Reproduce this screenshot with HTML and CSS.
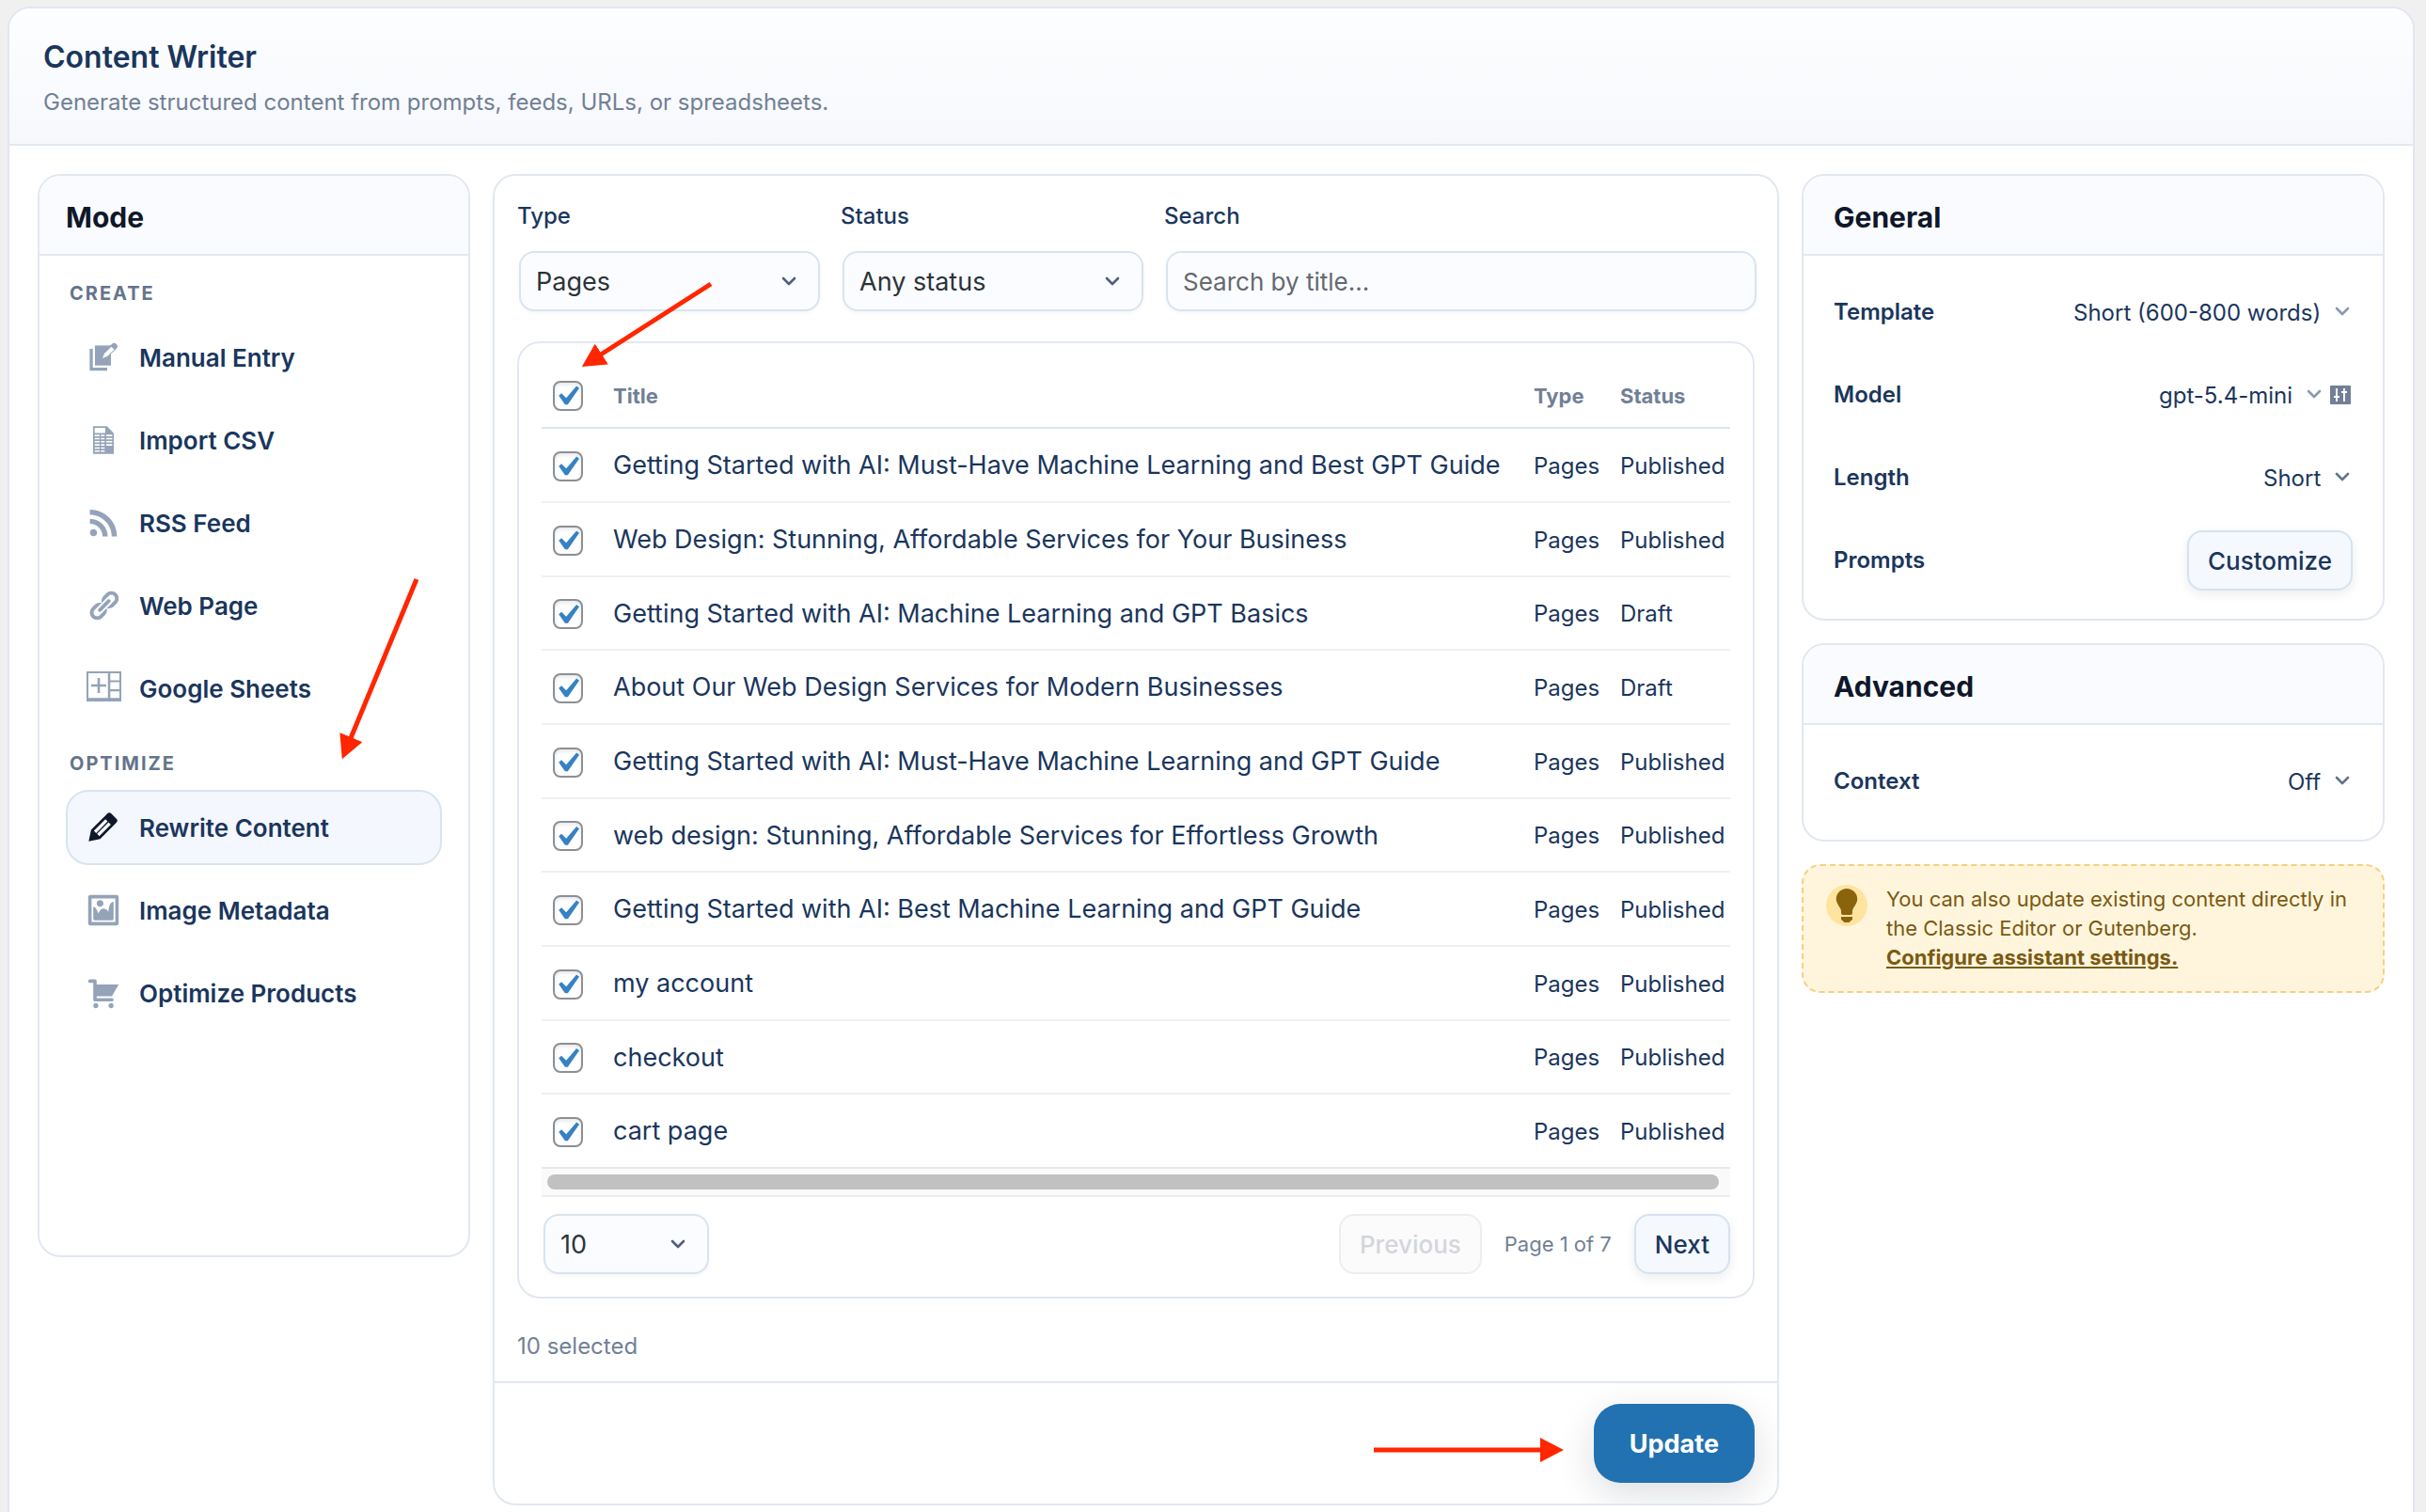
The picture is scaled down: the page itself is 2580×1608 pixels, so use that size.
FILE: index.html
```html
<!DOCTYPE html>
<html lang="en">
<head>
    <meta charset="UTF-8">
    <meta name="viewport" content="width=device-width, initial-scale=1.0">
    <title>Content Writer</title>
    <link rel="stylesheet" href="styles.css">
</head>
<body>
    <!-- shared chevron -->
    <svg width="0" height="0" class="sprite">
        <symbol id="chevron" viewBox="0 0 16 10">
            <path d="M2 2l6 6 6-6" fill="none" stroke="currentColor" stroke-width="2.6" stroke-linecap="round" stroke-linejoin="round"/>
        </symbol>
    </svg>

    <div class="shell">
        <header class="shell-header">
            <h1>Content Writer</h1>
            <p>Generate structured content from prompts, feeds, URLs, or spreadsheets.</p>
        </header>

        <div class="layout">
            <!-- Mode sidebar -->
            <aside class="card mode">
                <h2 class="card-title">Mode</h2>
                <nav class="mode-nav">
                    <h3>Create</h3>
                    <button type="button" class="mode-item">
                        <svg viewBox="0 0 36 36"><path d="M3.4 9h3.3v20H22v3.3H3.4z"/><path d="M9 5.4h17v21.3H9z"/><path d="M24 11.500l5.300-5" stroke="currentColor" stroke-width="7" stroke-linecap="round"/><path d="M17 19l2-5 7.500-7.200 3 3-7.500 7.200z" fill="#fff"/></svg>
                        Manual Entry
                    </button>
                    <button type="button" class="mode-item">
                        <svg viewBox="0 0 36 36"><path d="M7 3.3h14.7L29 10.7v22H7z"/><path fill="#fff" d="M8.7 5h11.2v5.6H8.7zM8.7 12.3H14V14H8.7zM15.3 12.3h4V14h-4zM21 12.3h6.4V14H21zM8.7 15.7H14v1.6H8.7zM15.3 15.7h4v1.6h-4zM21 15.7h6.4v1.6H21zM8.7 19H14v1.6H8.7zM15.3 19h4v1.6h-4zM21 19h6.4v1.6H21zM8.7 22.3H14v1.6H8.7zM15.3 22.3h4v1.6h-4zM21 22.3h6.4v1.6H21zM8.7 25.7H14v1.6H8.7zM15.3 25.7h4v1.6h-4zM8.7 29H14v1.6H8.7zM15.3 29h4v1.6h-4z"/></svg>
                        Import CSV
                    </button>
                    <button type="button" class="mode-item">
                        <svg viewBox="0 0 20 20"><path d="M14.92 18H18C18 9.32 10.82 2.25 2 2.25v3.02c7.12 0 12.92 5.71 12.92 12.73zm-5.44 0h3.08C12.56 12.27 7.82 7.6 2 7.6v3.02c2 0 3.87.77 5.29 2.16C8.7 14.17 9.48 16.03 9.48 18zm-5.35-.02c1.17 0 2.13-.93 2.13-2.09 0-1.15-.96-2.09-2.13-2.09-1.18 0-2.13.94-2.13 2.09 0 1.16.95 2.09 2.13 2.09z"/></svg>
                        RSS Feed
                    </button>
                    <button type="button" class="mode-item">
                        <svg viewBox="0 0 20 20"><path d="M17.74 2.76c1.68 1.69 1.68 4.41 0 6.1l-1.53 1.52c-1.12 1.12-2.7 1.47-4.14 1.09l2.62-2.61.76-.77.76-.76c.84-.84.84-2.2 0-3.04-.84-.85-2.2-.85-3.04 0l-.77.76-3.38 3.38c-.37-1.44-.02-3.02 1.1-4.14l1.52-1.53c1.69-1.68 4.42-1.68 6.1 0zM8.59 13.43l5.34-5.34c.42-.42.42-1.1 0-1.52-.44-.43-1.13-.39-1.53 0l-5.33 5.34c-.42.42-.42 1.1 0 1.52.44.43 1.13.39 1.52 0zm-.76 2.29l4.14-4.15c.38 1.44.03 3.02-1.09 4.14l-1.52 1.53c-1.69 1.68-4.41 1.68-6.1 0-1.68-1.68-1.68-4.42 0-6.1l1.53-1.52c1.12-1.12 2.7-1.47 4.14-1.1l-4.14 4.15c-.85.84-.85 2.2 0 3.05.84.84 2.2.84 3.04 0z"/></svg>
                        Web Page
                    </button>
                    <button type="button" class="mode-item">
                        <svg viewBox="0 0 36 36"><path fill-rule="evenodd" d="M0 0h37v32H0zM2 2v26.300h20.800V2zM25.300 2v7.400H35V2zM25.300 11.600v7.400H35v-7.400zM25.300 21.200v7.100H35v-7.100z"/><path d="M11.700 7h2.600v6.700h6.700v2.600h-6.700V23h-2.600v-6.700H5v-2.600h6.700z"/></svg>
                        Google Sheets
                    </button>

                    <h3>Optimize</h3>
                    <button type="button" class="mode-item active">
                        <svg viewBox="2 2 16.4 16.4"><path d="M13.89 3.39l2.71 2.72c.46.46.42 1.24.03 1.64l-8.01 8.02-5.56 1.16 1.16-5.58s7.6-7.63 7.99-8.03c.39-.39 1.22-.39 1.68.07zm-2.73 2.79l-5.59 5.61 1.11 1.11 5.54-5.65zm-2.97 8.23l5.58-5.6-1.07-1.08-5.59 5.6z"/></svg>
                        Rewrite Content
                    </button>
                    <button type="button" class="mode-item">
                        <svg viewBox="0 0 20 20"><path d="M2.25 1h15.5c.69 0 1.25.56 1.25 1.25v15.5c0 .69-.56 1.25-1.25 1.25H2.25C1.56 19 1 18.44 1 17.75V2.25C1 1.56 1.56 1 2.25 1zM17 17V3H3v14h14zM10 6c0-1.1-.9-2-2-2s-2 .9-2 2 .9 2 2 2 2-.9 2-2zm3 5s0-6 3-6v10c0 .55-.45 1-1 1H5c-.55 0-1-.45-1-1V8c2 0 3 4 3 4s1-3 3-3 3 2 3 2z"/></svg>
                        Image Metadata
                    </button>
                    <button type="button" class="mode-item">
                        <svg viewBox="0 0 20 20"><path d="M6 13h9c.55 0 1 .45 1 1s-.45 1-1 1H5c-.55 0-1-.45-1-1V4H2c-.55 0-1-.45-1-1s.45-1 1-1h3c.55 0 1 .45 1 1v2h13l-4 7H6v1zm-.5 3c.83 0 1.5.67 1.5 1.5S6.33 19 5.5 19 4 18.33 4 17.5 4.67 16 5.5 16zm9 0c.83 0 1.5.67 1.5 1.5s-.67 1.5-1.5 1.5-1.5-.67-1.5-1.5.67-1.5 1.5-1.5z"/></svg>
                        Optimize Products
                    </button>
                </nav>
            </aside>

            <!-- Content picker -->
            <main class="card picker">
                <div class="picker-body">
                    <div class="filters">
                        <div class="field">
                            <label for="filter-type">Type</label>
                            <div class="select-box">
                                <select id="filter-type"><option>Pages</option></select>
                                <svg><use href="#chevron"/></svg>
                            </div>
                        </div>
                        <div class="field">
                            <label for="filter-status">Status</label>
                            <div class="select-box">
                                <select id="filter-status"><option>Any status</option></select>
                                <svg><use href="#chevron"/></svg>
                            </div>
                        </div>
                        <div class="field">
                            <label for="filter-search">Search</label>
                            <input type="text" id="filter-search" placeholder="Search by title...">
                        </div>
                    </div>

                    <div class="table-panel">
                        <table>
                            <colgroup>
                                <col class="col-check">
                                <col>
                                <col class="col-type">
                                <col class="col-status">
                            </colgroup>
                            <thead>
                                <tr>
                                    <th><input type="checkbox" aria-label="Select all" checked></th>
                                    <th>Title</th>
                                    <th>Type</th>
                                    <th>Status</th>
                                </tr>
                            </thead>
                            <tbody>
                                <tr>
                                    <td><input type="checkbox" id="p1" checked></td>
                                    <td><label for="p1">Getting Started with AI: Must-Have Machine Learning and Best GPT Guide</label></td>
                                    <td>Pages</td>
                                    <td>Published</td>
                                </tr>
                                <tr>
                                    <td><input type="checkbox" id="p2" checked></td>
                                    <td><label for="p2">Web Design: Stunning, Affordable Services for Your Business</label></td>
                                    <td>Pages</td>
                                    <td>Published</td>
                                </tr>
                                <tr>
                                    <td><input type="checkbox" id="p3" checked></td>
                                    <td><label for="p3">Getting Started with AI: Machine Learning and GPT Basics</label></td>
                                    <td>Pages</td>
                                    <td>Draft</td>
                                </tr>
                                <tr>
                                    <td><input type="checkbox" id="p4" checked></td>
                                    <td><label for="p4">About Our Web Design Services for Modern Businesses</label></td>
                                    <td>Pages</td>
                                    <td>Draft</td>
                                </tr>
                                <tr>
                                    <td><input type="checkbox" id="p5" checked></td>
                                    <td><label for="p5">Getting Started with AI: Must-Have Machine Learning and GPT Guide</label></td>
                                    <td>Pages</td>
                                    <td>Published</td>
                                </tr>
                                <tr>
                                    <td><input type="checkbox" id="p6" checked></td>
                                    <td><label for="p6">web design: Stunning, Affordable Services for Effortless Growth</label></td>
                                    <td>Pages</td>
                                    <td>Published</td>
                                </tr>
                                <tr>
                                    <td><input type="checkbox" id="p7" checked></td>
                                    <td><label for="p7">Getting Started with AI: Best Machine Learning and GPT Guide</label></td>
                                    <td>Pages</td>
                                    <td>Published</td>
                                </tr>
                                <tr>
                                    <td><input type="checkbox" id="p8" checked></td>
                                    <td><label for="p8">my account</label></td>
                                    <td>Pages</td>
                                    <td>Published</td>
                                </tr>
                                <tr>
                                    <td><input type="checkbox" id="p9" checked></td>
                                    <td><label for="p9">checkout</label></td>
                                    <td>Pages</td>
                                    <td>Published</td>
                                </tr>
                                <tr>
                                    <td><input type="checkbox" id="p10" checked></td>
                                    <td><label for="p10">cart page</label></td>
                                    <td>Pages</td>
                                    <td>Published</td>
                                </tr>
                            </tbody>
                        </table>
                        <div class="scroll-track"><div class="scroll-thumb"></div></div>

                        <div class="pager">
                            <div class="select-box per-page">
                                <select aria-label="Rows per page"><option>10</option></select>
                                <svg><use href="#chevron"/></svg>
                            </div>
                            <button type="button" class="btn" disabled>Previous</button>
                            <span class="page-info">Page 1 of 7</span>
                            <button type="button" class="btn">Next</button>
                        </div>
                    </div>

                    <p class="selected-count">10 selected</p>
                </div>

                <footer class="picker-footer">
                    <button type="button" class="btn-primary">Update</button>
                </footer>
            </main>

            <!-- Settings -->
            <div class="settings">
                <section class="card">
                    <h2 class="card-title">General</h2>
                    <div class="rows">
                        <div class="row">
                            <label for="template">Template</label>
                            <select id="template"><option>Short (600-800 words)</option></select>
                            <svg class="chev light"><use href="#chevron"/></svg>
                        </div>
                        <div class="row">
                            <label for="model">Model</label>
                            <select id="model"><option>gpt-5.4-mini</option></select>
                            <svg class="chev light"><use href="#chevron"/></svg>
                            <button type="button" class="tune" aria-label="Model settings">
                                <svg width="22" height="20" viewBox="0 0 22 20"><rect width="22" height="20" rx="1" fill="#718096"/><path d="M7 3v14M4 12h6M15 3v14M12 7h6" stroke="#fff" stroke-width="2" fill="none"/></svg>
                            </button>
                        </div>
                        <div class="row">
                            <label for="length">Length</label>
                            <select id="length"><option>Short</option></select>
                            <svg class="chev"><use href="#chevron"/></svg>
                        </div>
                        <div class="row">
                            <span class="row-name">Prompts</span>
                            <button type="button" class="btn">Customize</button>
                        </div>
                    </div>
                </section>

                <section class="card">
                    <h2 class="card-title">Advanced</h2>
                    <div class="rows">
                        <div class="row">
                            <label for="context">Context</label>
                            <select id="context"><option>Off</option></select>
                            <svg class="chev"><use href="#chevron"/></svg>
                        </div>
                    </div>
                </section>

                <div class="tip">
                    <span class="tip-icon">
                        <svg width="40" height="40" viewBox="0 0 20 20"><path d="M10 1c3.11 0 5.63 2.52 5.63 5.62 0 1.84-2.03 4.58-2.03 4.58-.33.44-.6 1.25-.6 1.8v1c0 .55-.45 1-1 1H8c-.55 0-1-.45-1-1v-1c0-.55-.27-1.36-.6-1.8 0 0-2.02-2.74-2.02-4.58C4.38 3.52 6.89 1 10 1zM7 16.87V16h6v.87c0 .62-.13 1.13-.75 1.13H12c0 .62-.4 1-1.02 1h-2c-.61 0-.98-.38-.98-1h-.25c-.62 0-.75-.51-.75-1.13z"/></svg>
                    </span>
                    <p>You can also update existing content directly in the Classic Editor or Gutenberg.<br><a href="#">Configure assistant settings.</a></p>
                </div>
            </div>
        </div>
    </div>

    <!-- tutorial arrows drawn over the page -->
    <svg class="arrows" width="2580" height="1608" viewBox="0 0 2580 1608">
        <defs>
            <marker id="head" markerUnits="userSpaceOnUse" markerWidth="25" markerHeight="26" refX="1" refY="13" orient="auto">
                <path d="M0 0l25 13L0 26z" fill="#ff2600"/>
            </marker>
        </defs>
        <g stroke="#ff2600" stroke-width="5">
            <path d="M756 302L639 377" marker-end="url(#head)"/>
            <path d="M443 616L373 785" marker-end="url(#head)"/>
            <path d="M1461 1542H1639" marker-end="url(#head)"/>
        </g>
    </svg>
</body>
</html>
```
FILE: styles.css
```css
* {
    box-sizing: border-box;
}

body {
    margin: 0;
    height: 100vh;
    padding: 7px 12px 0 8px;
    overflow: hidden;
    background: #f0f0f1;
    color: #1a365d;
    font-family: Inter, "Liberation Sans", sans-serif;
    font-size: 24px;
    line-height: 30px;
}

h1, h2, h3, p {
    margin: 0;
}

button, select, input {
    font-family: inherit;
    color: inherit;
}

.sprite {
    position: absolute;
}

.shell {
    background: #fff;
    border: 2px solid #e2e6f0;
    border-radius: 24px;
    overflow: hidden;
}

.shell-header {
    padding: 33px 36px 29px;
    border-bottom: 2px solid #e2e8f0;
    background: linear-gradient(180deg, #fdfeff, #f6f8fc);
}

.shell-header h1 {
    font-size: 32px;
    font-weight: 600;
    line-height: 38px;
    margin-bottom: 14px;
}

.shell-header p {
    color: #718096;
}

.layout {
    display: grid;
    grid-template-columns: 460px minmax(0, 1fr) 620px;
    gap: 24px;
    align-items: start;
    padding: 30px;
}

.card {
    border: 2px solid #e2e8f0;
    border-radius: 24px;
    background: #fff;
    overflow: hidden;
}

.card-title {
    padding: 29px 32px 24px;
    border-bottom: 2px solid #e2e8f0;
    background: #f9fbff;
    color: #0f172a;
    font-size: 30px;
    font-weight: 700;
    line-height: 30px;
}

/* Mode */
.mode .card-title {
    padding-left: 28px;
}

.mode-nav {
    display: flex;
    flex-direction: column;
    gap: 8px;
    padding: 0 28px 239px;
}

.mode-nav h3 {
    padding: 26px 4px 6px;
    color: #64748b;
    font-size: 20px;
    font-weight: 700;
    line-height: 28px;
    letter-spacing: 2px;
    text-transform: uppercase;
}

.mode-nav h3:not(:first-child) {
    padding-top: 18px;
}

.mode-item {
    display: flex;
    align-items: center;
    gap: 20px;
    height: 80px;
    padding: 0 20px;
    border: 2px solid transparent;
    border-radius: 24px;
    background: none;
    font-size: 26px;
    font-weight: 600;
    cursor: pointer;
}

.mode-item svg {
    width: 36px;
    height: 36px;
    overflow: visible;
    color: #94a3b8;
    fill: currentColor;
}

.mode-item.active {
    border-color: #d8e4f0;
    background: #f4f7fd;
}

.mode-item.active svg {
    color: #0f172a;
}

/* Picker */
.picker-body {
    padding: 28px 24px 22px;
}

.filters {
    display: grid;
    grid-template-columns: 322px 322px 1fr;
    gap: 22px;
    margin-bottom: 32px;
}

.field {
    display: flex;
    flex-direction: column;
    gap: 22px;
    font-weight: 500;
}

.field input,
.select-box select {
    height: 64px;
    margin: 0 0 0 2px;
    padding: 0 16px;
    border: 2px solid #d8e4f0;
    border-radius: 16px;
    background: #fbfcff;
    box-shadow: 0 2px 4px rgba(15, 23, 42, 0.04);
    color: #2c3338;
    font-size: 27px;
    appearance: none;
}

.field input {
    margin-right: -2px;
    font-size: 26px;
}

.field input::placeholder {
    color: #646970;
}

.select-box {
    display: grid;
    align-items: center;
}

.select-box select,
.select-box svg {
    grid-area: 1 / 1;
}

.select-box svg {
    width: 16px;
    height: 10px;
    margin-right: 25px;
    justify-self: end;
    color: #50607a;
    pointer-events: none;
}

.table-panel {
    padding: 24px;
    border: 2px solid #e2e8f0;
    border-radius: 24px;
}

table {
    width: 100%;
    table-layout: fixed;
    border-collapse: separate;
    border-spacing: 0;
}

.col-check {
    width: 64px;
}

.col-type {
    width: 92px;
}

.col-status {
    width: 129px;
}

th, td {
    padding: 2px 0 0 12px;
    text-align: left;
    vertical-align: middle;
    white-space: nowrap;
}

th {
    height: 67px;
    padding: 0 0 2px 12px;
    border-bottom: 2px solid #dfe7f0;
    color: #718096;
    font-size: 22px;
    font-weight: 700;
}

td {
    height: 79px;
    border-bottom: 2px solid #f0f0f1;
}

tr:nth-child(3n) td {
    height: 78px;
}

tr:last-child td {
    height: 77px;
    border-bottom: 0;
}

td label {
    font-size: 27px;
}

input[type="checkbox"] {
    display: block;
    width: 32px;
    height: 32px;
    margin: 0;
    border: 2px solid #8c8f94;
    border-radius: 8px;
    background: #fff;
    box-shadow: inset 0 2px 4px rgba(0, 0, 0, 0.1);
    appearance: none;
}

input[type="checkbox"]:checked::before {
    content: "";
    display: block;
    width: 42px;
    height: 42px;
    margin: -6px 0 0 -8px;
    background: #3582c4;
    clip-path: polygon(74% 24%, 81% 29%, 52% 71%, 45% 71%, 29% 48%, 36% 42%, 48% 54%);
}

.scroll-track {
    padding: 6px 12px 6px 6px;
    border-top: 2px solid #e8e8e8;
    border-bottom: 2px solid #ededed;
    background: #fafafa;
}

.scroll-thumb {
    height: 16px;
    border-radius: 8px;
    background: #c1c1c1;
}

.pager {
    display: flex;
    align-items: center;
    gap: 24px;
    margin-top: 18px;
}

.per-page {
    width: 178px;
    margin-right: auto;
}

.page-info {
    color: #718096;
    font-size: 22px;
}

.btn {
    height: 64px;
    padding: 0 20px;
    border: 2px solid #d5e2f0;
    border-radius: 16px;
    background: #f5f8fc;
    box-shadow: 0 4px 12px rgba(15, 23, 42, 0.08);
    font-size: 26px;
    font-weight: 500;
    cursor: pointer;
}

.btn:disabled {
    border-color: #ededee;
    background: #fbfbfb;
    box-shadow: none;
    color: #d3d6db;
}

.selected-count {
    margin-top: 36px;
    color: #718096;
}

.picker-footer {
    display: flex;
    justify-content: flex-end;
    padding: 22px 24px;
    border-top: 2px solid #e2e8f0;
}

.btn-primary {
    height: 84px;
    padding: 0 38px;
    border: 0;
    border-radius: 28px;
    background: #2271b1;
    box-shadow: 0 12px 40px rgba(15, 23, 42, 0.14);
    color: #fff;
    font-size: 27px;
    font-weight: 700;
    cursor: pointer;
}

/* Settings */
.settings {
    display: flex;
    flex-direction: column;
    gap: 24px;
}

.rows {
    padding: 16px 32px 18px;
}

.row {
    display: flex;
    align-items: center;
    height: 88px;
}

.row label,
.row-name {
    margin-right: auto;
    font-weight: 600;
}

.row select {
    padding: 0;
    border: 0;
    background: none;
    font-size: 24px;
    appearance: none;
}

.chev {
    width: 16px;
    height: 10px;
    margin: 0 3px 3px 14px;
    color: #64748b;
}

.chev.light {
    color: #8c9ab0;
}

.tune {
    display: flex;
    margin: 0 2px 0 6px;
    padding: 0;
    border: 0;
    background: none;
}

.tip {
    display: flex;
    align-items: flex-start;
    gap: 20px;
    padding: 20px 24px;
    border: 2px dashed #f3d183;
    border-radius: 20px;
    background: #fff5dc;
    color: #7a5a12;
    font-size: 22px;
    line-height: 31px;
}

.tip-icon {
    display: flex;
    flex-shrink: 0;
    align-items: center;
    justify-content: center;
    width: 44px;
    height: 44px;
    border-radius: 50%;
    background: #ffe4a0;
    fill: #8a640c;
}

.tip a {
    color: inherit;
    font-weight: 700;
}

.arrows {
    position: absolute;
    top: 0;
    left: 0;
    pointer-events: none;
}
```
